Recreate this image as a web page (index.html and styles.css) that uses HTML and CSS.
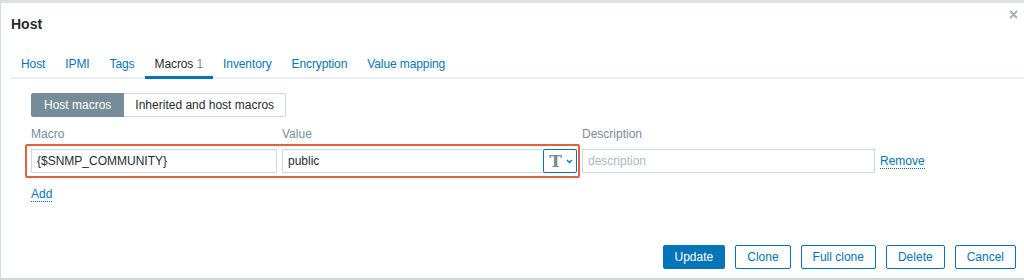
FILE: index.html
```html
<!DOCTYPE html>
<html lang="en">
<head>
  <meta charset="UTF-8" />
  <title>Host</title>
  <link rel="stylesheet" href="styles.css">
</head>
<body>
  <div class="dialog">
    <div class="dialog-header">
      <h4>Host</h4>
      <button class="btn-close" title="Close">
        <svg width="9" height="9" viewBox="0 0 9 9"><path d="M1 1L8 8M8 1L1 8" stroke="#a6b0b6" stroke-width="2"/></svg>
      </button>
    </div>

    <ul class="tabs">
      <li><a href="#">Host</a></li>
      <li><a href="#">IPMI</a></li>
      <li><a href="#">Tags</a></li>
      <li class="active"><a href="#">Macros <sup>1</sup></a></li>
      <li><a href="#">Inventory</a></li>
      <li><a href="#">Encryption</a></li>
      <li><a href="#">Value mapping</a></li>
    </ul>

    <div class="tab-body">
      <div class="radio-seg">
        <span class="seg on">Host macros</span>
        <span class="seg">Inherited and host macros</span>
      </div>

      <div class="macros">
        <div class="col-head">Macro</div>
        <div class="col-head">Value</div>
        <div class="col-head">Description</div>
        <div></div>

        <input class="field" type="text" value="{$SNMP_COMMUNITY}">
        <div class="field value-field">
          <span class="value-text">public</span>
          <button class="btn-type">
            <span class="t-glyph">T</span>
            <svg width="7" height="5" viewBox="0 0 7 5"><path d="M1 1L3.5 3.5L6 1" fill="none" stroke="#0275b8" stroke-width="1.3"/></svg>
          </button>
        </div>
        <input class="field" type="text" placeholder="description">
        <a class="link-action" href="#">Remove</a>

        <div class="highlight"></div>
      </div>

      <a class="link-action add" href="#">Add</a>
    </div>

    <div class="dialog-footer">
      <button class="btn primary">Update</button>
      <button class="btn">Clone</button>
      <button class="btn">Full clone</button>
      <button class="btn">Delete</button>
      <button class="btn">Cancel</button>
    </div>
  </div>
</body>
</html>
```

FILE: styles.css
```css
body {
  margin: 0;
  font-family: "Liberation Sans", Arial, sans-serif;
  font-size: 12px;
  color: #1f2c33;
  background: #fff;
}

.dialog {
  display: flex;
  flex-direction: column;
  height: 280px;
  box-sizing: border-box;
  border-top: 3px solid #dde1e4;
  border-left: 1px solid #d3d8db;
  border-bottom: 2px solid #d3d8db;
}

.dialog-header {
  display: flex;
  justify-content: space-between;
  align-items: flex-start;
  padding: 12px 5px 0 10px;
}

.dialog-header h4 {
  margin: 0;
  font-size: 14px;
  line-height: 18px;
  font-weight: bold;
  color: #1f2c33;
}

.btn-close {
  border: none;
  background: none;
  padding: 0;
  margin-top: -8px;
  width: 12px;
  height: 12px;
  cursor: pointer;
}

.tabs {
  list-style: none;
  display: flex;
  margin: 15px 0 0 10px;
  padding: 0;
  border-bottom: 2px solid #ebeef0;
  letter-spacing: -0.1px;
}

.tabs li a {
  display: block;
  padding: 9px 10px 5px;
  line-height: 14px;
  color: #0275b8;
  text-decoration: none;
  border-bottom: 3px solid transparent;
  margin-bottom: -2px;
}

.tabs li.active a {
  color: #1f2c33;
  border-bottom-color: #0275b8;
}

.tabs sup {
  vertical-align: baseline;
  font-size: 12px;
  color: #768d99;
}

.tab-body {
  padding: 14px 0 0 30px;
}

.radio-seg {
  display: inline-flex;
  height: 24px;
  border: 1px solid #cfd8dc;
  border-radius: 2px;
  box-sizing: border-box;
}

.seg {
  display: flex;
  align-items: center;
  padding: 0 11px;
  font-size: 12px;
  color: #1f2c33;
}

.seg.on {
  background: #768d99;
  color: #fff;
  margin: -1px 0 -1px -1px;
  padding: 0 13px;
  border-radius: 2px 0 0 2px;
}

.macros {
  position: relative;
  display: grid;
  grid-template-columns: 246px 295px 293px auto;
  column-gap: 5px;
  align-items: center;
  margin-top: 10px;
}

.col-head {
  line-height: 14px;
  padding-bottom: 8px;
  color: #768d99;
}

.field {
  height: 24px;
  box-sizing: border-box;
  border: 1px solid #cfd8dc;
  padding: 0 5px;
  font-family: "Liberation Sans", Arial, sans-serif;
  font-size: 12px;
  color: #1f2c33;
  background: #fff;
  outline: none;
}

.field::placeholder {
  color: #acbbc2;
}

.value-field {
  display: flex;
  align-items: center;
  justify-content: space-between;
  padding-right: 0;
}

.btn-type {
  display: flex;
  align-items: center;
  justify-content: center;
  gap: 4px;
  height: 24px;
  width: 34px;
  margin-right: -1px;
  box-sizing: border-box;
  border: 1px solid #0275b8;
  border-radius: 2px;
  background: #fff;
  padding: 0 0 0 2px;
}

.t-glyph {
  font-family: "DejaVu Serif", "Liberation Serif", serif;
  font-weight: bold;
  font-size: 17px;
  line-height: 1;
  color: #768d99;
}

.link-action {
  color: #0275b8;
  text-decoration: none;
  border-bottom: 1px dotted #0275b8;
  justify-self: start;
  line-height: 13px;
  margin-top: 2px;
}

.highlight {
  position: absolute;
  left: -6px;
  top: 17px;
  width: 551px;
  height: 30px;
  border: 2px solid #e0633d;
  border-radius: 2px;
  pointer-events: none;
}

.add {
  display: inline-block;
  margin-top: 15px;
}

.dialog-footer {
  margin-top: auto;
  display: flex;
  justify-content: flex-end;
  gap: 10px;
  padding: 0 8px 9px 0;
}

.btn {
  height: 24px;
  padding: 0 11px;
  font-family: "Liberation Sans", Arial, sans-serif;
  font-size: 12px;
  color: #0275b8;
  background: #fff;
  border: 1px solid #0275b8;
  border-radius: 2px;
}

.btn.primary {
  background: #0275b8;
  color: #fff;
}
```
